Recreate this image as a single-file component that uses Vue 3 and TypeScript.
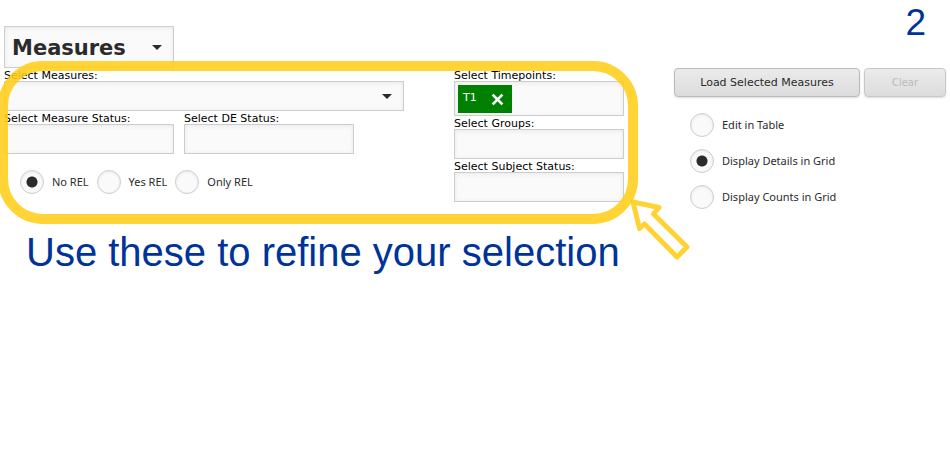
<script setup lang="ts">
import { ref } from 'vue'

interface Choice {
  value: string
  label: string
}

const relChoices: Choice[] = [
  { value: 'no', label: 'No REL' },
  { value: 'yes', label: 'Yes REL' },
  { value: 'only', label: 'Only REL' },
]
const viewChoices: Choice[] = [
  { value: 'edit', label: 'Edit in Table' },
  { value: 'details', label: 'Display Details in Grid' },
  { value: 'counts', label: 'Display Counts in Grid' },
]

const mode = ref('measures')
const measure = ref('')
const measureStatus = ref('')
const deStatus = ref('')
const timepoint = ref('')
const timepoints = ref<string[]>(['T1'])
const groups = ref('')
const subjectStatus = ref('')
const rel = ref('no')
const view = ref('details')

function removeTimepoint(name: string) {
  timepoints.value = timepoints.value.filter((t) => t !== name)
}
</script>

<template>
  <main class="page">
    <header class="top">
      <div class="drop title">
        <select v-model="mode" aria-label="Mode">
          <option value="measures">Measures</option>
        </select>
        <svg class="caret" viewBox="0 0 10 5" aria-hidden="true"><path d="M0 0h10L5 5z" /></svg>
      </div>
      <span class="step">2</span>
    </header>

    <div class="panels">
      <section class="filters">
        <div class="column">
          <div class="field">
            <label for="measure">Select Measures:</label>
            <div class="drop">
              <select id="measure" v-model="measure">
                <option value=""></option>
              </select>
              <svg class="caret" viewBox="0 0 10 5" aria-hidden="true"><path d="M0 0h10L5 5z" /></svg>
            </div>
          </div>
          <div class="pair">
            <div class="field">
              <label for="measure-status">Select Measure Status:</label>
              <input id="measure-status" v-model="measureStatus" class="box" type="text" />
            </div>
            <div class="field">
              <label for="de-status">Select DE Status:</label>
              <input id="de-status" v-model="deStatus" class="box" type="text" />
            </div>
          </div>
          <div class="radios row">
            <label v-for="c in relChoices" :key="c.value" class="radio">
              <input v-model="rel" type="radio" name="rel" :value="c.value" />
              <span>{{ c.label }}</span>
            </label>
          </div>
        </div>

        <div class="column">
          <div class="field">
            <label for="timepoints">Select Timepoints:</label>
            <div class="box tags">
              <span v-for="t in timepoints" :key="t" class="tag">
                {{ t }}
                <button type="button" :aria-label="'Remove ' + t" @click="removeTimepoint(t)">
                  <svg viewBox="0 0 12 12" aria-hidden="true"><path d="M1.5 1.5l9 9M10.5 1.5l-9 9" /></svg>
                </button>
              </span>
              <input id="timepoints" v-model="timepoint" type="text" />
            </div>
          </div>
          <div class="field">
            <label for="groups">Select Groups:</label>
            <input id="groups" v-model="groups" class="box" type="text" />
          </div>
          <div class="field">
            <label for="subject-status">Select Subject Status:</label>
            <input id="subject-status" v-model="subjectStatus" class="box" type="text" />
          </div>
        </div>

        <div class="highlight"></div>
        <svg class="arrow" viewBox="0 0 66 66" aria-hidden="true">
          <path d="M6 5L32 10.5L26.5 17L60 50L50 60L17.5 27L12.5 31.5Z" />
        </svg>
      </section>

      <section class="actions">
        <div class="buttons">
          <button type="button" class="load">Load Selected Measures</button>
          <button type="button" class="clear" disabled>Clear</button>
        </div>
        <div class="radios stack">
          <label v-for="c in viewChoices" :key="c.value" class="radio">
            <input v-model="view" type="radio" name="view" :value="c.value" />
            <span>{{ c.label }}</span>
          </label>
        </div>
      </section>
    </div>

    <p class="caption">Use these to refine your selection</p>
  </main>
</template>

<style>
body {
  margin: 0;
  background: #fff;
}
</style>

<style scoped>
* {
  box-sizing: border-box;
}

.page {
  padding: 0 4px;
  color: #000;
  font: 11px/13px "DejaVu Sans", Verdana, sans-serif;
}

.top {
  display: flex;
  justify-content: space-between;
  align-items: flex-start;
}

.step,
.caption {
  color: #039;
  font: 37px/46px "Liberation Sans", Arial, sans-serif;
}

.step {
  padding-right: 20px;
}

.drop {
  display: grid;
  align-items: center;
}

.drop > * {
  grid-area: 1 / 1;
}

.drop select,
.box {
  width: 100%;
  min-width: 0;
  height: 30px;
  margin: 0;
  padding: 0 8px;
  border: 1px solid #cdcdcd;
  border-radius: 0;
  background: #fafafa;
  box-shadow: inset 0 1px 4px #e8e8e8;
  color: #2b2b2b;
  font: inherit;
  appearance: none;
}

.caret {
  justify-self: end;
  width: 10px;
  height: 5px;
  margin-right: 12px;
  fill: #2b2b2b;
  pointer-events: none;
}

.title {
  width: 170px;
  margin-top: 26px;
}

.title select {
  height: 42px;
  padding: 2px 7px 0;
  font: bold 21px/38px "DejaVu Sans", Verdana, sans-serif;
}

.panels {
  display: grid;
  grid-template-columns: minmax(0, 620fr) minmax(0, 272fr);
  align-items: start;
  gap: 50px;
}

.filters {
  position: relative;
  display: grid;
  grid-template-columns: minmax(0, 400fr) minmax(0, 170fr);
  gap: 50px;
}

.field {
  display: flex;
  flex-direction: column;
}

.field > label {
  padding-top: 2px;
  line-height: 11px;
  white-space: nowrap;
}

.pair {
  display: grid;
  grid-template-columns: minmax(0, 17fr) minmax(0, 17fr) minmax(0, 4fr);
  gap: 10px;
}

.tags {
  display: flex;
  height: 35px;
  padding: 3px;
}

.tag {
  display: flex;
  flex: none;
  gap: 14px;
  height: 28px;
  padding: 6px 8px 0 5px;
  background: #008000;
  color: #fff;
}

.tag button {
  width: 13px;
  height: 18px;
  padding: 0 0 2px;
  border: 0;
  background: none;
}

.tag svg {
  display: block;
  width: 13px;
  height: 13px;
  fill: none;
  stroke: #fff;
  stroke-width: 2.6;
}

.tags input {
  flex: 1;
  min-width: 0;
  padding: 0 4px;
  border: 0;
  background: none;
  font: inherit;
}

.radios {
  display: flex;
  padding: 16px 0 0 16px;
}

.row {
  gap: 8px;
}

.stack {
  flex-direction: column;
  gap: 12px;
}

.radio {
  display: flex;
  align-items: center;
  gap: 8px;
  color: #2b2b2b;
  font: 11px/24px "Noto Sans", "Open Sans", sans-serif;
  white-space: nowrap;
}

.radio input {
  flex: none;
  width: 24px;
  height: 24px;
  margin: 0;
  border: 1px solid #cdcdcd;
  border-radius: 50%;
  background: #fafafa;
  box-shadow: inset 0 1px 3px #e8e8e8;
  appearance: none;
}

.radio input:checked {
  background: radial-gradient(circle, #2b2b2b 5px, #fafafa 6px);
}

.buttons {
  display: grid;
  grid-template-columns: 186fr 82fr;
  gap: 4px;
}

.buttons button {
  height: 29px;
  padding: 0;
  border: 1px solid #bbb;
  border-radius: 4px;
  background: linear-gradient(#ebebeb, #dcdcdc);
  box-shadow: 0 1px 2px #ddd;
  color: #2b2b2b;
  font: inherit;
  white-space: nowrap;
}

.buttons .clear {
  border-color: #c8c8c8;
  color: #bbb;
  font-size: 10px;
}

.highlight {
  position: absolute;
  inset: -7px -14px -22px -6px;
  border: 10px solid #ffce18;
  border-radius: 45px;
  opacity: 0.88;
  pointer-events: none;
}

.arrow {
  position: absolute;
  right: -69px;
  bottom: -61px;
  width: 66px;
  height: 66px;
  fill: none;
  stroke: #ffce18;
  stroke-width: 5;
  stroke-linejoin: round;
  opacity: 0.88;
  pointer-events: none;
}

.caption {
  margin: 20px 0 0;
  padding-left: 22px;
  font-size: 40px;
}
</style>
